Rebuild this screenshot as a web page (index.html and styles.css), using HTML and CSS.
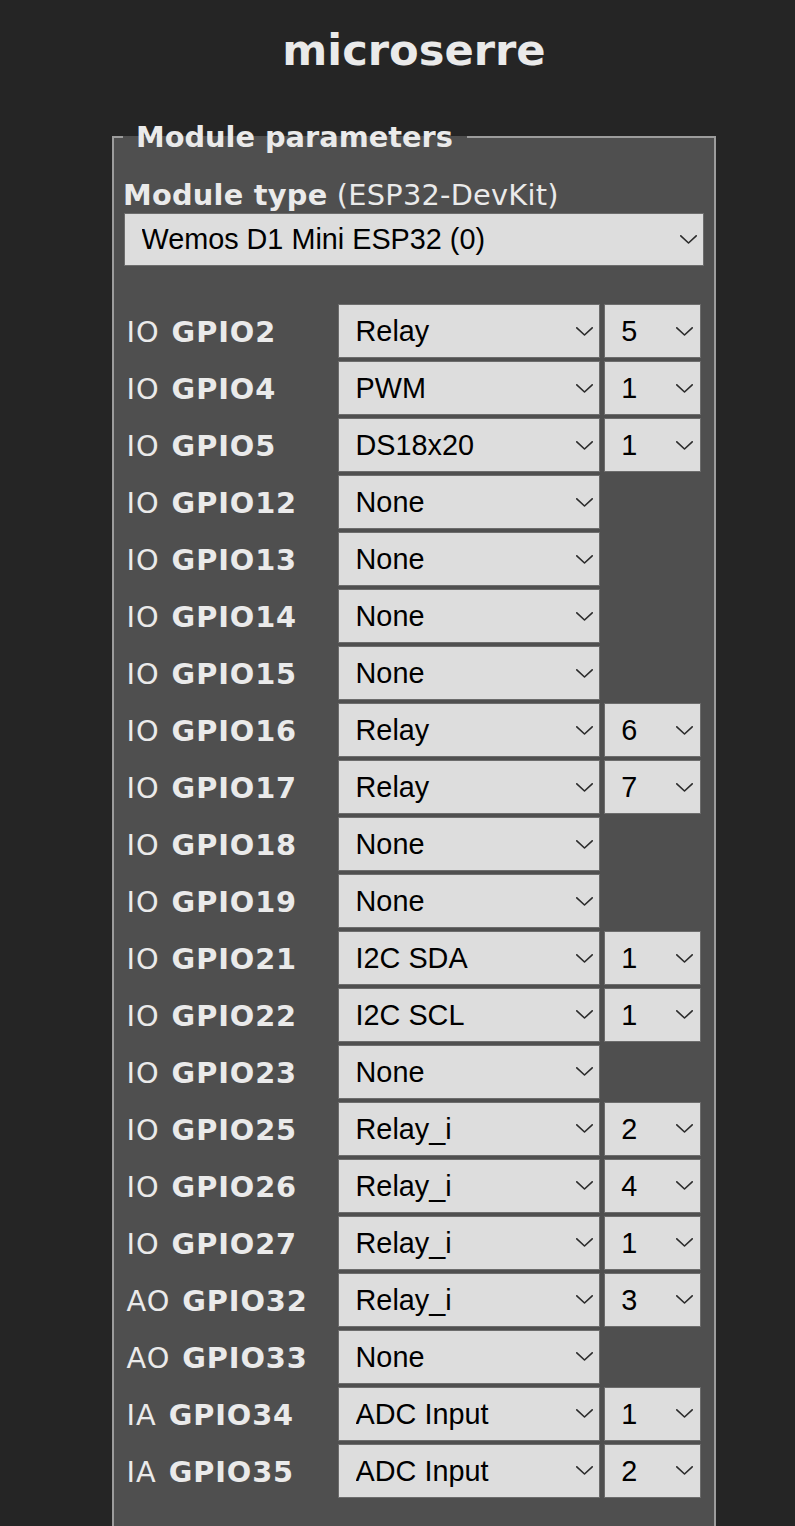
FILE: index.html
```html
<!DOCTYPE html>
<html lang="fr">
<head>
<meta charset="utf-8">
<title>microserre - Module</title>
<link rel="stylesheet" href="styles.css">
</head>
<body>
<div class="wrap">
  <h2 class="title">microserre</h2>
  <fieldset class="box">
    <legend class="legend">&nbsp;Module parameters&nbsp;</legend>
    <div class="mt"><b>Module type</b> (ESP32-DevKit)</div>
    <div class="sel sel-wide">
      <select><option>Wemos D1 Mini ESP32 (0)</option></select>
      <svg class="chev" viewBox="0 0 17 9"><path d="M0.8 0.8 L8.5 8 L16.2 0.8"/></svg>
    </div>
    <div class="grid">
      <div class="lab">IO <b>GPIO2</b></div>
      <div class="sel"><select><option>Relay</option></select><svg class="chev" viewBox="0 0 17 9"><path d="M0.8 0.8 L8.5 8 L16.2 0.8"/></svg></div>
      <div class="sel"><select><option>5</option></select><svg class="chev" viewBox="0 0 17 9"><path d="M0.8 0.8 L8.5 8 L16.2 0.8"/></svg></div>

      <div class="lab">IO <b>GPIO4</b></div>
      <div class="sel"><select><option>PWM</option></select><svg class="chev" viewBox="0 0 17 9"><path d="M0.8 0.8 L8.5 8 L16.2 0.8"/></svg></div>
      <div class="sel"><select><option>1</option></select><svg class="chev" viewBox="0 0 17 9"><path d="M0.8 0.8 L8.5 8 L16.2 0.8"/></svg></div>

      <div class="lab">IO <b>GPIO5</b></div>
      <div class="sel"><select><option>DS18x20</option></select><svg class="chev" viewBox="0 0 17 9"><path d="M0.8 0.8 L8.5 8 L16.2 0.8"/></svg></div>
      <div class="sel"><select><option>1</option></select><svg class="chev" viewBox="0 0 17 9"><path d="M0.8 0.8 L8.5 8 L16.2 0.8"/></svg></div>

      <div class="lab">IO <b>GPIO12</b></div>
      <div class="sel"><select><option>None</option></select><svg class="chev" viewBox="0 0 17 9"><path d="M0.8 0.8 L8.5 8 L16.2 0.8"/></svg></div>

      <div class="lab">IO <b>GPIO13</b></div>
      <div class="sel"><select><option>None</option></select><svg class="chev" viewBox="0 0 17 9"><path d="M0.8 0.8 L8.5 8 L16.2 0.8"/></svg></div>

      <div class="lab">IO <b>GPIO14</b></div>
      <div class="sel"><select><option>None</option></select><svg class="chev" viewBox="0 0 17 9"><path d="M0.8 0.8 L8.5 8 L16.2 0.8"/></svg></div>

      <div class="lab">IO <b>GPIO15</b></div>
      <div class="sel"><select><option>None</option></select><svg class="chev" viewBox="0 0 17 9"><path d="M0.8 0.8 L8.5 8 L16.2 0.8"/></svg></div>

      <div class="lab">IO <b>GPIO16</b></div>
      <div class="sel"><select><option>Relay</option></select><svg class="chev" viewBox="0 0 17 9"><path d="M0.8 0.8 L8.5 8 L16.2 0.8"/></svg></div>
      <div class="sel"><select><option>6</option></select><svg class="chev" viewBox="0 0 17 9"><path d="M0.8 0.8 L8.5 8 L16.2 0.8"/></svg></div>

      <div class="lab">IO <b>GPIO17</b></div>
      <div class="sel"><select><option>Relay</option></select><svg class="chev" viewBox="0 0 17 9"><path d="M0.8 0.8 L8.5 8 L16.2 0.8"/></svg></div>
      <div class="sel"><select><option>7</option></select><svg class="chev" viewBox="0 0 17 9"><path d="M0.8 0.8 L8.5 8 L16.2 0.8"/></svg></div>

      <div class="lab">IO <b>GPIO18</b></div>
      <div class="sel"><select><option>None</option></select><svg class="chev" viewBox="0 0 17 9"><path d="M0.8 0.8 L8.5 8 L16.2 0.8"/></svg></div>

      <div class="lab">IO <b>GPIO19</b></div>
      <div class="sel"><select><option>None</option></select><svg class="chev" viewBox="0 0 17 9"><path d="M0.8 0.8 L8.5 8 L16.2 0.8"/></svg></div>

      <div class="lab">IO <b>GPIO21</b></div>
      <div class="sel"><select><option>I2C SDA</option></select><svg class="chev" viewBox="0 0 17 9"><path d="M0.8 0.8 L8.5 8 L16.2 0.8"/></svg></div>
      <div class="sel"><select><option>1</option></select><svg class="chev" viewBox="0 0 17 9"><path d="M0.8 0.8 L8.5 8 L16.2 0.8"/></svg></div>

      <div class="lab">IO <b>GPIO22</b></div>
      <div class="sel"><select><option>I2C SCL</option></select><svg class="chev" viewBox="0 0 17 9"><path d="M0.8 0.8 L8.5 8 L16.2 0.8"/></svg></div>
      <div class="sel"><select><option>1</option></select><svg class="chev" viewBox="0 0 17 9"><path d="M0.8 0.8 L8.5 8 L16.2 0.8"/></svg></div>

      <div class="lab">IO <b>GPIO23</b></div>
      <div class="sel"><select><option>None</option></select><svg class="chev" viewBox="0 0 17 9"><path d="M0.8 0.8 L8.5 8 L16.2 0.8"/></svg></div>

      <div class="lab">IO <b>GPIO25</b></div>
      <div class="sel"><select><option>Relay_i</option></select><svg class="chev" viewBox="0 0 17 9"><path d="M0.8 0.8 L8.5 8 L16.2 0.8"/></svg></div>
      <div class="sel"><select><option>2</option></select><svg class="chev" viewBox="0 0 17 9"><path d="M0.8 0.8 L8.5 8 L16.2 0.8"/></svg></div>

      <div class="lab">IO <b>GPIO26</b></div>
      <div class="sel"><select><option>Relay_i</option></select><svg class="chev" viewBox="0 0 17 9"><path d="M0.8 0.8 L8.5 8 L16.2 0.8"/></svg></div>
      <div class="sel"><select><option>4</option></select><svg class="chev" viewBox="0 0 17 9"><path d="M0.8 0.8 L8.5 8 L16.2 0.8"/></svg></div>

      <div class="lab">IO <b>GPIO27</b></div>
      <div class="sel"><select><option>Relay_i</option></select><svg class="chev" viewBox="0 0 17 9"><path d="M0.8 0.8 L8.5 8 L16.2 0.8"/></svg></div>
      <div class="sel"><select><option>1</option></select><svg class="chev" viewBox="0 0 17 9"><path d="M0.8 0.8 L8.5 8 L16.2 0.8"/></svg></div>

      <div class="lab">AO <b>GPIO32</b></div>
      <div class="sel"><select><option>Relay_i</option></select><svg class="chev" viewBox="0 0 17 9"><path d="M0.8 0.8 L8.5 8 L16.2 0.8"/></svg></div>
      <div class="sel"><select><option>3</option></select><svg class="chev" viewBox="0 0 17 9"><path d="M0.8 0.8 L8.5 8 L16.2 0.8"/></svg></div>

      <div class="lab">AO <b>GPIO33</b></div>
      <div class="sel"><select><option>None</option></select><svg class="chev" viewBox="0 0 17 9"><path d="M0.8 0.8 L8.5 8 L16.2 0.8"/></svg></div>

      <div class="lab">IA <b>GPIO34</b></div>
      <div class="sel"><select><option>ADC Input</option></select><svg class="chev" viewBox="0 0 17 9"><path d="M0.8 0.8 L8.5 8 L16.2 0.8"/></svg></div>
      <div class="sel"><select><option>1</option></select><svg class="chev" viewBox="0 0 17 9"><path d="M0.8 0.8 L8.5 8 L16.2 0.8"/></svg></div>

      <div class="lab">IA <b>GPIO35</b></div>
      <div class="sel"><select><option>ADC Input</option></select><svg class="chev" viewBox="0 0 17 9"><path d="M0.8 0.8 L8.5 8 L16.2 0.8"/></svg></div>
      <div class="sel"><select><option>2</option></select><svg class="chev" viewBox="0 0 17 9"><path d="M0.8 0.8 L8.5 8 L16.2 0.8"/></svg></div>
    </div>
  </fieldset>
</div>
</body>
</html>
```
FILE: styles.css
```css
html, body {
  margin: 0;
  padding: 0;
}
body {
  background: #252525;
  color: #eaeaea;
  font-family: "DejaVu Sans", Verdana, sans-serif;
  font-size: 28.8px;
}
.wrap {
  margin-left: 112px;
  width: 604px;
}
.title {
  margin: 0;
  padding-top: 25px;
  font-size: 43.2px;
  line-height: 50px;
  font-weight: bold;
  text-align: center;
  color: #eaeaea;
}
.box {
  margin: 45.6px 0 0;
  border: 2px solid #9c9c9c;
  background: #4f4f4f;
  padding: 0 9px 120px 9px;
  min-width: 0;
}
.legend {
  font-weight: bold;
  font-size: 28.8px;
  line-height: 33.5px;
  padding: 0 4px 0 3px;
  margin-left: 0;
}
.mt {
  margin-top: 25px;
  line-height: 33.5px;
  white-space: nowrap;
  letter-spacing: 0.25px;
}
.sel {
  position: relative;
  height: 53.4px;
}
.sel-wide {
  width: 580px;
  margin-left: 1px;
}
.sel select {
  -webkit-appearance: none;
  appearance: none;
  display: block;
  width: 100%;
  height: 100%;
  box-sizing: border-box;
  margin: 0;
  border: 1.5px solid #6c6c6c;
  border-radius: 0;
  background: #dddddd;
  color: #000000;
  font-family: "Liberation Sans", Arial, sans-serif;
  font-size: 28.8px;
  padding: 0 30px 0 16.5px;
  outline: none;
}
.chev {
  position: absolute;
  right: 7.5px;
  top: 50%;
  width: 17px;
  height: 9px;
  margin-top: -4.5px;
  pointer-events: none;
  fill: none;
  stroke: #2b2b2b;
  stroke-width: 1.6;
  stroke-linecap: round;
  stroke-linejoin: round;
}
.grid {
  margin-top: 38.5px;
  margin-left: 3.6px;
  display: grid;
  grid-template-columns: 208.1px 262.4px 96.7px;
  grid-auto-rows: 53.4px;
  column-gap: 3.4px;
  row-gap: 3.6px;
}
.lab {
  grid-column: 1;
  white-space: nowrap;
  line-height: 53.4px;
  padding-top: 2px;
  letter-spacing: 0.9px;
  word-spacing: 2px;
}
```
